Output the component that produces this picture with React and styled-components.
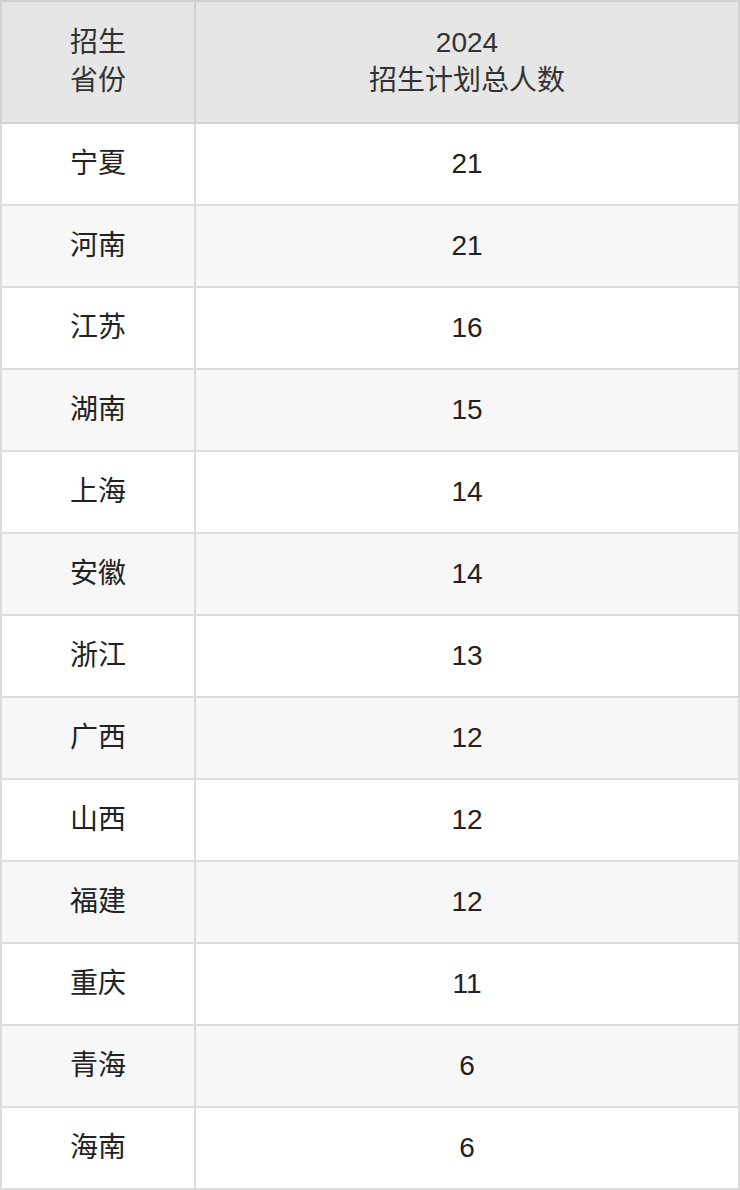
import React from 'react';
import styled, { createGlobalStyle } from 'styled-components';

const rows = [
  ['宁夏', 21],
  ['河南', 21],
  ['江苏', 16],
  ['湖南', 15],
  ['上海', 14],
  ['安徽', 14],
  ['浙江', 13],
  ['广西', 12],
  ['山西', 12],
  ['福建', 12],
  ['重庆', 11],
  ['青海', 6],
  ['海南', 6],
];

const GlobalStyle = createGlobalStyle`
  html, body {
    margin: 0;
    padding: 0;
    background: #fff;
  }
  body {
    font-family: "Liberation Sans", Arial, "Noto Sans CJK SC", sans-serif;
    color: #333;
  }
`;

const Table = styled.table`
  width: 740px;
  border-collapse: collapse;
  table-layout: fixed;
  border: 2px solid #dcdcdc;
`;

const HeadCell = styled.th`
  height: 120px;
  padding: 0;
  background-color: #e6e6e6;
  border: 2px solid #d2d2d2;
  font-size: 28px;
  font-weight: normal;
  line-height: 38px;
  text-align: center;
  vertical-align: middle;
  color: #333;
`;

const Row = styled.tr`
  background-color: ${(p) => (p.$striped ? '#f7f7f7' : '#fff')};
`;

const Cell = styled.td`
  height: 80px;
  padding: 0;
  border: 2px solid #dcdcdc;
  font-size: 28px;
  line-height: 32px;
  text-align: center;
  vertical-align: middle;
  color: #222;
`;

const App = () => {
  return (
    <>
      <GlobalStyle />
      <Table>
        <colgroup>
          <col style={{ width: 194 }} />
          <col />
        </colgroup>
        <thead>
          <tr>
            <HeadCell>
              招生
              <br />
              省份
            </HeadCell>
            <HeadCell>
              2024
              <br />
              招生计划总人数
            </HeadCell>
          </tr>
        </thead>
        <tbody>
          {rows.map(([province, total], idx) => (
            <Row key={province} $striped={idx % 2 === 1}>
              <Cell>{province}</Cell>
              <Cell>{total}</Cell>
            </Row>
          ))}
        </tbody>
      </Table>
    </>
  );
};

export default App;
